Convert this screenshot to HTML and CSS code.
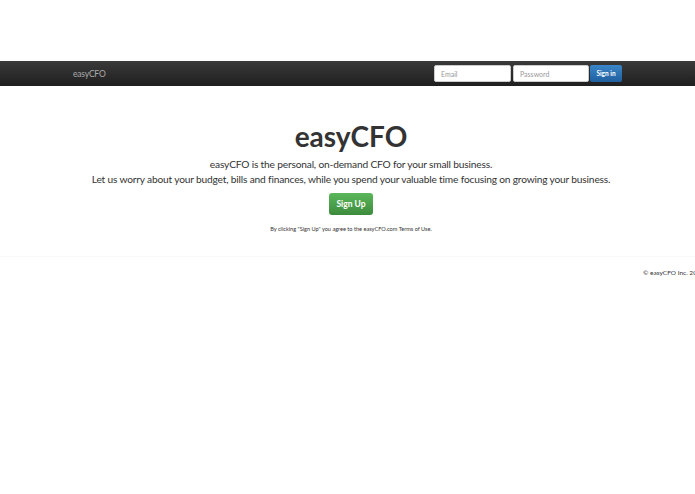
FILE: index.html
```html
<!DOCTYPE html>
<html lang="en">
<head>
    <meta charset="UTF-8">
    <meta name="viewport" content="width=device-width, initial-scale=1.0">
    <title>easyCFO</title>
    <link rel="stylesheet" href="styles.css">
</head>
<body>
<nav class="navbar">
    <a class="brand" href="#">easyCFO</a>
    <form class="signin">
        <input type="text" class="field-email" placeholder="Email">
        <input type="password" class="field-password" placeholder="Password">
        <button type="button" class="btn-signin">Sign in</button>
    </form>
</nav>
<main class="hero">
    <h1>easyCFO</h1>
    <p class="lead">easyCFO is the personal, on-demand CFO for your small business.</p>
    <p class="lead">Let us worry about your budget, bills and finances, while you spend your valuable time focusing on growing your business.</p>
    <button type="button" class="btn-signup">Sign Up</button>
    <p class="terms">By clicking "Sign Up" you agree to the easyCFO.com Terms of Use.</p>
</main>
<footer class="footer">
    <p>&copy; easyCFO Inc. 2012</p>
</footer>
</body>
</html>
```

FILE: styles.css
```css
html, body {
    overflow: hidden;
}
body {
    margin: 0;
    padding-top: 61px;
    height: 433px;
    font-family: Lato, sans-serif;
    color: #333;
    background: #fff;
}
.navbar {
    display: flex;
    align-items: center;
    justify-content: space-between;
    height: 25px;
    padding: 0 73px;
    background: linear-gradient(#3a3a3a, #1f1f1f);
}
.brand {
    font-size: 8.5px;
    letter-spacing: -0.2px;
    color: #aaa;
    text-decoration: none;
}
.signin {
    display: flex;
}
.signin input {
    box-sizing: border-box;
    height: 17px;
    padding: 0 6px;
    font-family: inherit;
    font-size: 7px;
    background: #fff;
    border: 1px solid #ccc;
    border-radius: 2px;
}
.signin input::placeholder {
    color: #999;
}
.field-email {
    width: 77px;
    margin-right: 2px;
}
.field-password {
    width: 76px;
    margin-right: 1px;
}
.btn-signin {
    width: 32px;
    height: 17px;
    padding: 0;
    font-family: inherit;
    font-size: 6.5px;
    font-weight: 700;
    color: #fff;
    background: linear-gradient(#3a86c8, #1f5f9f);
    border: 0;
    border-radius: 2px;
}
.hero {
    display: flex;
    flex-direction: column;
    align-items: center;
    padding: 33px 0 0 7px;
    text-align: center;
}
h1 {
    margin: 0 0 4px;
    font-size: 28px;
    line-height: 34px;
    font-weight: 700;
    color: #333;
}
.lead {
    margin: 0;
    font-size: 10.2px;
    letter-spacing: -0.18px;
    line-height: 15px;
    white-space: nowrap;
}
.btn-signup {
    width: 44px;
    height: 22px;
    margin-top: 6px;
    padding: 0;
    font-family: inherit;
    font-size: 8.5px;
    font-weight: 700;
    color: #fff;
    background: linear-gradient(#5bb75b, #3d8b3d);
    border: 0;
    border-radius: 3px;
}
.terms {
    margin: 10px 0 0;
    font-size: 5.6px;
    line-height: 8px;
}
.footer {
    margin-top: 23px;
    padding-top: 11px;
    border-top: 1px solid #f8f8f8;
    white-space: nowrap;
}
.footer p {
    margin: 0 0 0 643px;
    font-size: 6.5px;
    line-height: 10px;
}
```
